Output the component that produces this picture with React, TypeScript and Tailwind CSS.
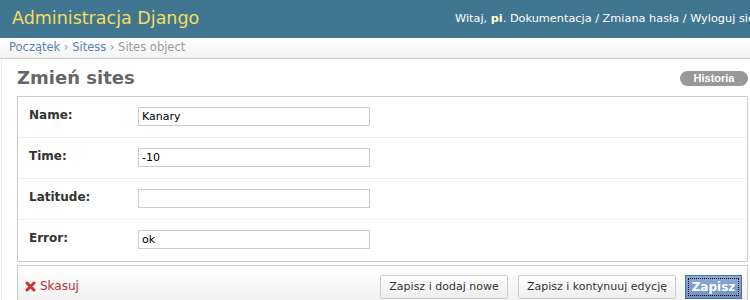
import React from "react";

const font = { fontFamily: '"DejaVu Sans", Verdana, sans-serif' } as React.CSSProperties;

function Row({ label, value }: { label: string; value: string }) {
  return (
    <div className="flex h-[41px] border-b border-[#eee] last:border-b-0">
      <div className="w-[120px] pl-[11px] pt-[9px] text-[12px] font-bold text-[#333]">{label}</div>
      <div className="pt-[10px]">
        <div className="w-[232px] h-[19px] border border-[#ccc] bg-white px-[3px] text-[11px] leading-[17px] text-black">{value}</div>
      </div>
    </div>
  );
}

export default function App() {
  return (
    <div className="w-[750px] h-[300px] overflow-hidden bg-white" style={font}>
      <div className="h-[38px] bg-[#417690] flex items-center overflow-hidden">
        <div className="w-[455px] shrink-0 pl-[12px] text-[17.5px] text-[#f5dd5d] leading-none pb-[1px]">Administracja Django</div>
        <div className="whitespace-nowrap text-[11.3px] text-white pt-[1px]">
          Witaj, <b className="text-[#ffc]">pi</b>. Dokumentacja / Zmiana hasła / Wyloguj się
        </div>
      </div>
      <div className="h-[21px] border-b border-[#ccc] bg-gradient-to-b from-white to-[#f3f3f3] pl-[9px] text-[11.5px] leading-[19px] text-[#999]">
        <span className="text-[#5b80b2]">Początek</span> › <span className="text-[#5b80b2]">Sitess</span> › Sites object
      </div>
      <div className="ml-[1px] border-l border-[#eee] h-full pl-[15px] pr-[2px]">
        <div className="flex items-start justify-between pt-[7px] h-[37px]">
          <div className="text-[18px] font-bold text-[#666] leading-[24px]">Zmień sites</div>
          <div
            className="mt-[5px] h-[15px] w-[68px] rounded-full bg-[#999] text-center text-[11px] font-bold leading-[15px] text-white"
            style={{ fontFamily: '"Liberation Sans", Arial, sans-serif' }}
          >
            Historia
          </div>
        </div>
        <div className="border border-[#ccc] bg-white">
          <Row label="Name:" value="Kanary" />
          <Row label="Time:" value="-10" />
          <Row label="Latitude:" value="" />
          <Row label="Error:" value="ok" />
        </div>
        <div className="mt-[3px] h-[50px] border border-[#ccc] bg-gradient-to-b from-white to-[#ebebeb] flex items-start pt-[9px] pr-[5px]">
          <div className="pl-[7px] pt-[2px] text-[12px] text-[#a33] flex items-center gap-[4px]">
            <svg width="11" height="11" viewBox="0 0 11 11">
              <path d="M2 2 L9 9 M9 2 L2 9" stroke="#c33" strokeWidth="3" strokeLinecap="round" />
            </svg>
            Skasuj
          </div>
          <div className="ml-auto flex gap-[10px]">
            <div className="h-[24px] w-[128px] border border-[#ccc] bg-gradient-to-b from-white to-[#eee] text-center text-[11px] leading-[22px] text-[#333] rounded-[2px]">Zapisz i dodaj nowe</div>
            <div className="h-[24px] w-[158px] border border-[#ccc] bg-gradient-to-b from-white to-[#eee] text-center text-[11px] leading-[22px] text-[#333] rounded-[2px]">Zapisz i kontynuuj edycję</div>
            <div className="h-[24px] w-[57px] border border-[#4e7394] bg-gradient-to-b from-[#8aaad6] to-[#6f93c4] p-[2px] ml-[-1px]">
              <div className="h-full border border-dotted border-black text-center text-[12px] font-bold leading-[16px] text-white">Zapisz</div>
            </div>
          </div>
        </div>
      </div>
    </div>
  );
}
